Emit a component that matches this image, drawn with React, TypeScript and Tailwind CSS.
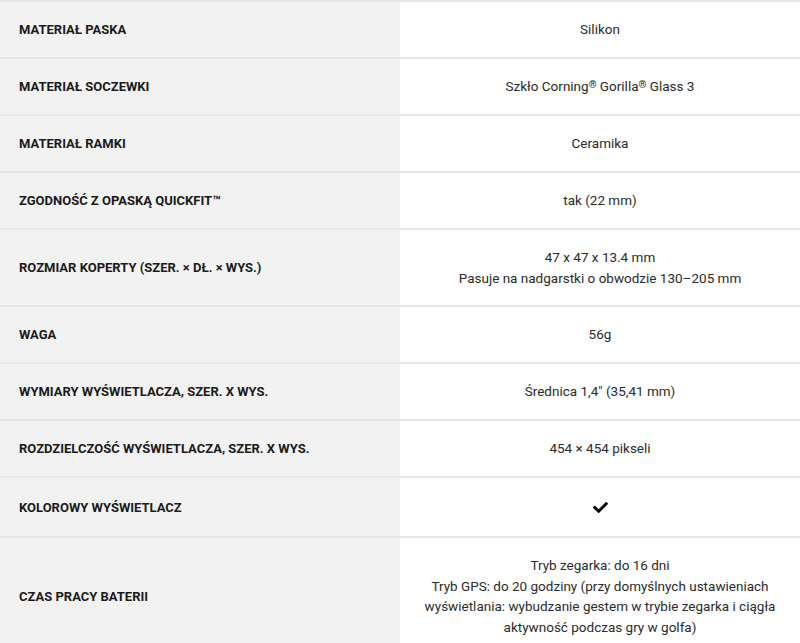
import React from "react";
import { FaCheck } from "react-icons/fa";

type Spec = { label: string; value: React.ReactNode };

const Reg = () => (
  <span className="relative -top-[3px] text-[10px] font-bold leading-[0]">®</span>
);

const specs: Spec[] = [
  { label: "MATERIAŁ PASKA", value: "Silikon" },
  {
    label: "MATERIAŁ SOCZEWKI",
    value: (
      <>
        Szkło Corning
        <Reg /> Gorilla
        <Reg /> Glass 3
      </>
    ),
  },
  { label: "MATERIAŁ RAMKI", value: "Ceramika" },
  { label: "ZGODNOŚĆ Z OPASKĄ QUICKFIT™", value: "tak (22 mm)" },
  {
    label: "ROZMIAR KOPERTY (SZER. × DŁ. × WYS.)",
    value: (
      <>
        47 x 47 x 13.4 mm
        <br />
        Pasuje na nadgarstki o obwodzie 130–205 mm
      </>
    ),
  },
  { label: "WAGA", value: "56g" },
  { label: "WYMIARY WYŚWIETLACZA, SZER. X WYS.", value: "Średnica 1,4\" (35,41 mm)" },
  { label: "ROZDZIELCZOŚĆ WYŚWIETLACZA, SZER. X WYS.", value: "454 × 454 pikseli" },
  {
    label: "KOLOROWY WYŚWIETLACZ",
    value: (
      <span className="flex h-[24px] items-center justify-center">
        <FaCheck className="h-[15px] w-[17px] text-black" />
      </span>
    ),
  },
  {
    label: "CZAS PRACY BATERII",
    value: (
      <>
        Tryb zegarka: do 16 dni
        <br />
        Tryb GPS: do 20 godziny (przy domyślnych ustawieniach wyświetlania:
        wybudzanie gestem w trybie zegarka i ciągła aktywność podczas gry w
        golfa)
      </>
    ),
  },
];

export default function App() {
  return (
    <div className="h-[643px] w-[800px] overflow-hidden bg-white font-['Roboto',sans-serif]">
      <div className="border-t-2 border-[#e6e6e6]">
        {specs.map((s) => (
          <div
            key={s.label}
            className="grid grid-cols-2 border-b-2 border-[#e6e6e6]"
          >
            <div className="flex items-center bg-[#f2f2f2] px-[19px] py-[17px] text-[13px] font-bold leading-[21px] text-[#1a1a1a]">
              {s.label}
            </div>
            <div className="flex items-center justify-center px-[18px] py-[17px] text-center text-[13.5px] leading-[20.5px] text-[#2b2b2b]">
              <div>{s.value}</div>
            </div>
          </div>
        ))}
      </div>
    </div>
  );
}
